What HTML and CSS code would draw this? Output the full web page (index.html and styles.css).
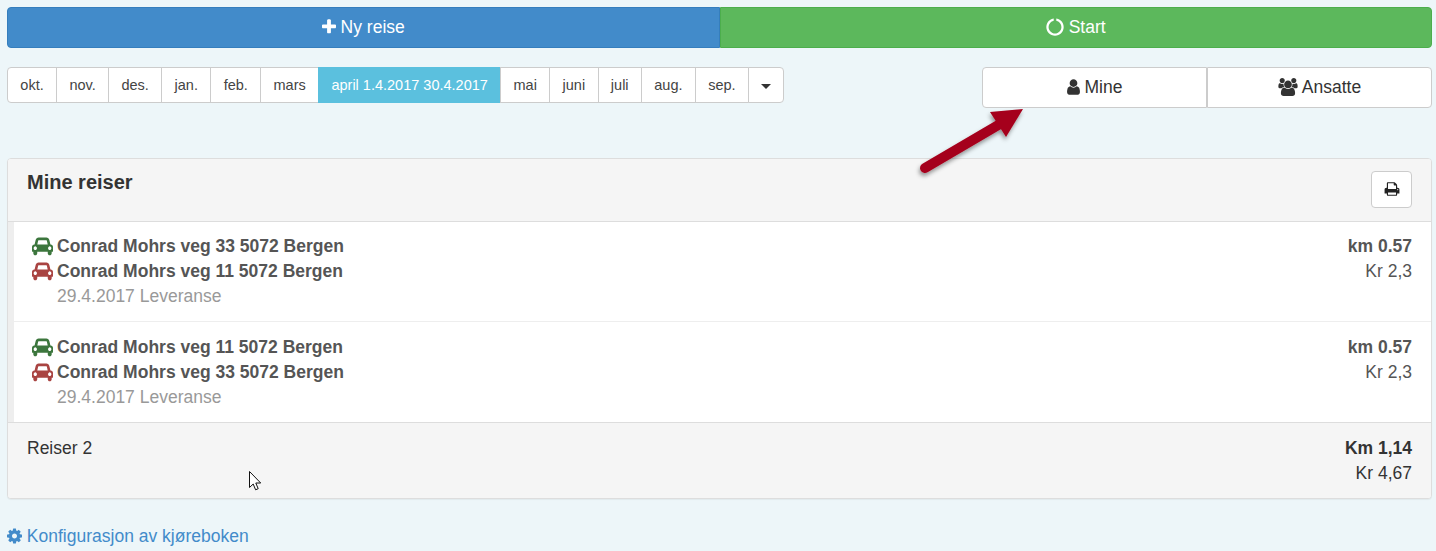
FILE: index.html
```html
<!DOCTYPE html>
<html lang="no">
<head>
    <meta charset="UTF-8">
    <meta name="viewport" content="width=device-width, initial-scale=1.0">
    <title>Kjørebok</title>
    <link rel="stylesheet" href="styles.css">
</head>
<body>
    <!-- Ikoner -->
    <svg class="icon-defs" aria-hidden="true">
        <symbol id="i-car" viewBox="0 0 2048 1792" preserveAspectRatio="none"><path d="M480 1088q0-66-47-113t-113-47-113 47-47 113 47 113 113 47 113-47 47-113zm36-320h1016l-89-357q-2-8-14-17.5t-21-9.5h-768q-9 0-21 9.5t-14 17.5zm1372 320q0-66-47-113t-113-47-113 47-47 113 47 113 113 47 113-47 47-113zm160-96v384q0 14-9 23t-23 9h-96v128q0 80-56 136t-136 56-136-56-56-136v-128h-1024v128q0 80-56 136t-136 56-136-56-56-136v-128h-96q-14 0-23-9t-9-23v-384q0-93 65.5-158.5t158.5-65.5h28l105-419q23-94 104-157.5t179-63.5h768q98 0 179 63.5t104 157.5l105 419h28q93 0 158.5 65.5t65.5 158.5z"/></symbol>
    </svg>

    <div class="page">
        <div class="top-buttons">
            <button class="btn btn-primary">
                <svg class="icon icon-plus" viewBox="192 0 1408 1792"><path d="M1600 736v192q0 40-28 68t-68 28h-416v416q0 40-28 68t-68 28h-192q-40 0-68-28t-28-68v-416h-416q-40 0-68-28t-28-68v-192q0-40 28-68t68-28h416v-416q0-40 28-68t68-28h192q40 0 68 28t28 68v416h416q40 0 68 28t28 68z"/></svg>
                Ny reise
            </button>
            <button class="btn btn-success">
                <svg class="icon" viewBox="0 0 1792 1792"><path d="M1760 896q0 176-68.5 336t-184 275.5-275.5 184-336 68.5-336-68.5-275.5-184-184-275.5-68.5-336q0-213 97-398.5t265-305.5 374-151v228q-221 45-366.5 221t-145.5 406q0 130 51 248.5t136.5 204 204 136.5 248.5 51 248.5-51 204-136.5 136.5-204 51-248.5q0-230-145.5-406t-366.5-221v-228q206 31 374 151t265 305.5 97 398.5z"/></svg>
                Start
            </button>
        </div>

        <div class="filter-row">
            <ul class="months">
                <li>okt.</li>
                <li>nov.</li>
                <li>des.</li>
                <li>jan.</li>
                <li>feb.</li>
                <li>mars</li>
                <li class="active">april 1.4.2017 30.4.2017</li>
                <li>mai</li>
                <li>juni</li>
                <li>juli</li>
                <li>aug.</li>
                <li>sep.</li>
                <li class="more"><span class="caret"></span></li>
            </ul>
            <div class="toggle">
                <button class="toggle-btn">
                    <svg class="icon icon-user" viewBox="256 0 1280 1792"><path d="M1536 1399q0 109-62.5 187t-150.5 78h-854q-88 0-150.5-78t-62.5-187q0-85 8.5-160.5t31.5-152 58.5-131 94-89 134.5-34.5q131 128 313 128t313-128q76 0 134.5 34.5t94 89 58.5 131 31.5 152 8.5 160.5zm-256-887q0 159-112.5 271.5t-271.5 112.5-271.5-112.5-112.5-271.5 112.5-271.5 271.5-112.5 271.5 112.5 112.5 271.5z"/></svg>
                    Mine
                </button>
                <button class="toggle-btn">
                    <svg class="icon icon-wide" viewBox="0 0 1920 1792"><path d="M593 896q-162 5-265 128h-134q-82 0-138-40.5t-56-118.5q0-353 124-353 6 0 43.5 21t97.5 42.5 119 21.5q67 0 133-23-5 37-5 66 0 139 81 256zm1071 637q0 120-73 189.5t-194 69.5h-874q-121 0-194-69.5t-73-189.5q0-53 3.5-103.5t14-109 26.5-108.5 43-97.5 62-81 85.5-53.5 111.5-20q10 0 43 21.5t73 48 107 48 135 21.5 135-21.5 107-48 73-48 43-21.5q61 0 111.5 20t85.5 53.5 62 81 43 97.5 26.5 108.5 14 109 3.5 103.5zm-1024-1277q0 106-75 181t-181 75-181-75-75-181 75-181 181-75 181 75 75 181zm704 384q0 159-112.5 271.5t-271.5 112.5-271.5-112.5-112.5-271.5 112.5-271.5 271.5-112.5 271.5 112.5 112.5 271.5zm576 225q0 78-56 118.5t-138 40.5h-134q-103-123-265-128 81-117 81-256 0-29-5-66 66 23 133 23 59 0 119-21.5t97.5-42.5 43.5-21q124 0 124 353zm-128-609q0 106-75 181t-181 75-181-75-75-181 75-181 181-75 181 75 75 181z"/></svg>
                    Ansatte
                </button>
            </div>
        </div>

        <div class="panel">
            <div class="panel-heading">
                <h3>Mine reiser</h3>
                <button class="print-btn">
                    <svg class="icon" viewBox="0 0 1792 1792"><path d="M448 1536h896v-256h-896v256zm0-640h896v-384h-160q-40 0-68-28t-28-68v-160h-640v640zm1152 64q0-26-19-45t-45-19-45 19-19 45 19 45 45 19 45-19 19-45zm128 0v416q0 13-9.5 22.5t-22.5 9.5h-224v160q0 40-28 68t-68 28h-960q-40 0-68-28t-28-68v-160h-224q-13 0-22.5-9.5t-9.5-22.5v-416q0-79 56.5-135.5t135.5-56.5h64v-544q0-40 28-68t68-28h672q40 0 88 20t76 48l152 152q28 28 48 76t20 88v256h64q79 0 135.5 56.5t56.5 135.5z"/></svg>
                </button>
            </div>

            <div class="trip">
                <div class="trip-info">
                    <div class="address"><svg class="car car-from"><use href="#i-car"/></svg>Conrad Mohrs veg 33 5072 Bergen</div>
                    <div class="address"><svg class="car car-to"><use href="#i-car"/></svg>Conrad Mohrs veg 11 5072 Bergen</div>
                    <div class="trip-date">29.4.2017 Leveranse</div>
                </div>
                <div class="trip-sum">
                    <div class="km">km 0.57</div>
                    <div>Kr 2,3</div>
                </div>
            </div>

            <div class="trip">
                <div class="trip-info">
                    <div class="address"><svg class="car car-from"><use href="#i-car"/></svg>Conrad Mohrs veg 11 5072 Bergen</div>
                    <div class="address"><svg class="car car-to"><use href="#i-car"/></svg>Conrad Mohrs veg 33 5072 Bergen</div>
                    <div class="trip-date">29.4.2017 Leveranse</div>
                </div>
                <div class="trip-sum">
                    <div class="km">km 0.57</div>
                    <div>Kr 2,3</div>
                </div>
            </div>

            <div class="panel-footer">
                <div>Reiser 2</div>
                <div class="trip-sum">
                    <div class="km">Km 1,14</div>
                    <div>Kr 4,67</div>
                </div>
            </div>
        </div>

        <a class="config-link" href="#">
            <svg class="icon icon-cog" viewBox="128 0 1536 1792"><path d="M1152 896q0-106-75-181t-181-75-181 75-75 181 75 181 181 75 181-75 75-181zm512-109v222q0 12-8 23t-20 13l-185 28q-19 54-39 91 35 50 107 138 10 12 10 25t-9 23q-27 37-99 108t-94 71q-12 0-26-9l-138-108q-44 23-91 38-16 136-29 186-7 28-36 28h-222q-14 0-24.5-8.5t-11.5-21.5l-28-184q-49-16-90-37l-141 107q-10 9-25 9-14 0-25-11-126-114-165-168-7-10-7-23 0-12 8-23 15-21 51-66.5t54-70.5q-27-50-41-99l-183-27q-13-2-21-12.5t-8-23.5v-222q0-12 8-23t19-13l186-28q14-46 39-92-40-57-107-138-10-12-10-24 0-10 9-23 26-36 98.5-107.5t94.5-71.5q13 0 26 10l138 107q44-23 91-38 16-136 29-186 7-28 36-28h222q14 0 24.5 8.5t11.5 21.5l28 184q49 16 90 37l142-107q9-9 24-9 13 0 25 10 129 119 165 170 7 8 7 22 0 12-8 23-15 21-51 66.5t-54 70.5q26 50 41 98l183 28q13 2 21 12.5t8 23.5z"/></svg>
            Konfigurasjon av kjøreboken
        </a>

        <!-- Pil fra skjermbildet -->
        <svg class="callout" viewBox="0 0 130 90">
            <defs>
                <filter id="arrow-shadow" x="-20%" y="-20%" width="140%" height="150%">
                    <feDropShadow dx="-1" dy="3" stdDeviation="2" flood-color="#000" flood-opacity="0.4"/>
                </filter>
            </defs>
            <g filter="url(#arrow-shadow)">
                <line x1="13" y1="68" x2="88" y2="24" stroke="#a5001c" stroke-width="10" stroke-linecap="round"/>
                <polygon points="111,9 78,12 94,37" fill="#a5001c"/>
            </g>
        </svg>

        <!-- Musepeker -->
        <svg class="mouse" viewBox="0 0 13 20">
            <path d="M0.5 0.5V16.5L4.2 13L6.6 18.8L9.2 17.7L6.8 12H11.7Z" fill="#fff" stroke="#111" stroke-width="1"/>
        </svg>
    </div>
</body>
</html>
```

FILE: styles.css
```css
* {
    box-sizing: border-box;
}
html, body {
    margin: 0;
    padding: 0;
    height: 100%;
    overflow: hidden;
}
body {
    font-family: "Liberation Sans", Arial, sans-serif;
    font-size: 17.5px;
    line-height: 25px;
    color: #333;
    background-color: #edf6f9;
}
button {
    font-family: inherit;
    font-size: 17.5px;
    line-height: 25px;
    cursor: pointer;
}
.icon-defs {
    position: absolute;
    width: 0;
    height: 0;
}
.icon {
    width: 18px;
    height: 18px;
    fill: currentColor;
    vertical-align: -3px;
}
.icon-wide {
    width: 20px;
}
.icon-plus {
    width: 14px;
}
.icon-user {
    width: 13px;
}
.icon-cog {
    width: 15px;
}
.page {
    position: relative;
    padding: 7px 4px 0 7px;
}

/* Knapper */
.top-buttons {
    display: flex;
}
.btn {
    flex: 1 1 0;
    padding: 7px 16px;
    color: white;
    border: 1px solid;
}
.btn-primary {
    background-color: #428bca;
    border-color: #357ebd;
    border-radius: 4px 0 0 4px;
}
.btn-success {
    background-color: #5cb85c;
    border-color: #4cae4c;
    border-radius: 0 4px 4px 0;
}

/* Måneder */
.filter-row {
    display: flex;
    justify-content: space-between;
    align-items: flex-start;
    margin-top: 19px;
}
.months {
    display: flex;
    list-style: none;
    margin: 0;
    padding: 0;
    font-size: 14.5px;
    line-height: 22px;
    color: #444;
}
.months li {
    padding: 6px 12.35px;
    background-color: white;
    border: 1px solid #ccc;
    margin-left: -1px;
}
.months li:first-child {
    margin-left: 0;
    border-radius: 4px 0 0 4px;
}
.months .active {
    color: white;
    background-color: #5bc0de;
    border-color: #5bc0de;
}
.months .more {
    padding: 6px 12px;
    border-radius: 0 4px 4px 0;
}
.caret {
    display: inline-block;
    vertical-align: middle;
    border-top: 5px solid #333;
    border-left: 5px solid transparent;
    border-right: 5px solid transparent;
}
.toggle {
    display: flex;
    width: 450px;
}
.toggle-btn {
    flex: 1 1 0;
    padding: 7px 16px;
    color: #333;
    background-color: white;
    border: 1px solid #ccc;
}
.toggle-btn:first-child {
    border-radius: 4px 0 0 4px;
}
.toggle-btn:last-child {
    border-radius: 0 4px 4px 0;
}

/* Panel */
.panel {
    margin-top: 50px;
    background-color: white;
    border: 1px solid #ddd;
    border-radius: 4px;
    box-shadow: 0 1px 1px rgba(0, 0, 0, 0.05);
    overflow: hidden;
}
.panel-heading {
    display: flex;
    justify-content: space-between;
    align-items: flex-start;
    height: 63px;
    padding: 12px 19px 0;
    background-color: #f5f5f5;
    border-bottom: 1px solid #ddd;
}
.panel-heading h3 {
    margin: -1px 0 0;
    font-size: 20px;
    line-height: 25px;
    font-weight: bold;
}
.print-btn {
    display: flex;
    align-items: center;
    justify-content: center;
    width: 41px;
    height: 37px;
    padding: 0 0 2px;
    color: #222;
    background-color: white;
    border: 1px solid #ccc;
    border-radius: 4px;
}
.print-btn .icon {
    width: 16px;
    height: 16px;
}
.trip {
    display: flex;
    justify-content: space-between;
    height: 100px;
    padding: 12px 19px 0 18px;
    border-left: 6px solid #eee;
    border-bottom: 1px solid #eee;
    color: #555;
}
.trip:nth-last-child(2) {
    padding-top: 13px;
    border-bottom: none;
}
.car {
    width: 21px;
    height: 20px;
    margin-right: 4px;
    vertical-align: -4px;
}
.car-from {
    fill: #3c763d;
}
.car-to {
    fill: #a94442;
}
.address {
    font-weight: bold;
}
.trip-date {
    padding-left: 25px;
    color: #999;
}
.trip-sum {
    text-align: right;
}
.km {
    font-weight: bold;
}
.panel-footer {
    display: flex;
    justify-content: space-between;
    height: 76px;
    padding: 13px 19px 0;
    background-color: #f5f5f5;
    border-top: 1px solid #ddd;
}
.config-link {
    display: block;
    margin-top: 25px;
    color: #428bca;
    text-decoration: none;
}

/* Pil og musepeker ligger over innholdet */
.callout {
    position: absolute;
    left: 912px;
    top: 100px;
    width: 130px;
    height: 90px;
}
.mouse {
    position: absolute;
    left: 249px;
    top: 471px;
    width: 13px;
    height: 20px;
}
```
